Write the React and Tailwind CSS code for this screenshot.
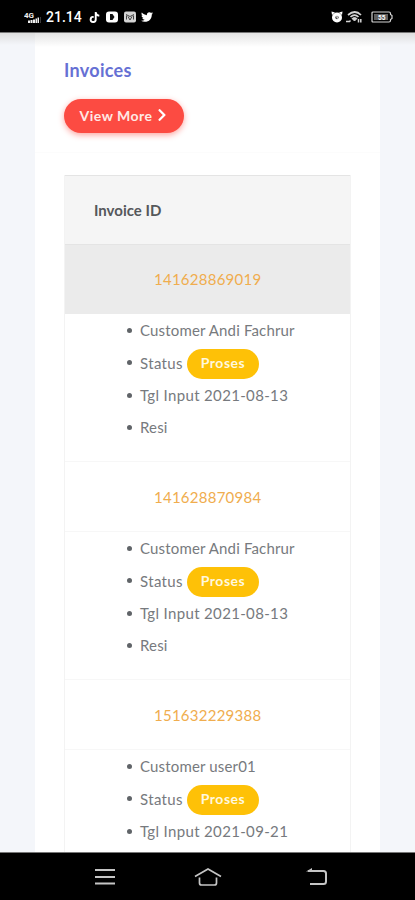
import { FaChevronRight, FaTwitter, FaTiktok } from "react-icons/fa";

const invoices = [
  { id: "141628869019", customer: "Andi Fachrur", date: "2021-08-13", showResi: true },
  { id: "141628870984", customer: "Andi Fachrur", date: "2021-08-13", showResi: true },
  { id: "151632229388", customer: "user01", date: "2021-09-21", showResi: false },
];

const StatusBar = () => {
  return (
    <div className="h-[33px] shrink-0 bg-black border-b border-[#777] flex items-center justify-between pl-6 pr-[22px] pt-0.5 text-white">
      <div className="flex items-center">
        <svg width="17" height="13" viewBox="0 0 17 13" fill="#f0f0f0">
          <text x="0" y="6.500" fontSize="8" fontWeight="700" fontFamily="Roboto, sans-serif">
            4G
          </text>
          <rect x="4" y="9.500" width="2" height="2.500" />
          <rect x="6.500" y="9" width="2" height="3" />
          <rect x="9" y="8.500" width="2" height="3.500" />
          <rect x="11.500" y="7.500" width="1.500" height="4.500" />
          <rect x="13.500" y="6.500" width="1.500" height="5.500" />
          <rect x="16" y="6" width="0.7" height="6" fill="#555" />
        </svg>
        <span className="ml-[5px] w-[35px] whitespace-nowrap font-[Roboto,sans-serif] text-[14px] leading-4 font-medium">
          21.14
        </span>
        <FaTiktok className="ml-2 w-[11px] h-[11px]" />
        <svg className="ml-[6px]" width="12" height="12" viewBox="0 0 12 12">
          <rect x="0" y="0.5" width="12" height="11" rx="3" fill="#fff" />
          <path d="M4 3h2.500L8.500 6 6.500 9H4z" fill="#111" />
        </svg>
        <svg className="ml-[6px]" width="12" height="12" viewBox="0 0 12 12">
          <rect x="0" y="0.5" width="12" height="11" rx="2" fill="#d4d4d4" />
          <path d="M2 3.500 6 5.500l4-2M2.500 4.500v4M9.500 4.500v4M4 5.500l2 3.500 2-3.500" fill="none" stroke="#444" />
        </svg>
        <FaTwitter className="ml-[5px] w-3 h-3" />
      </div>
      <div className="flex items-center">
        <svg width="12" height="12" viewBox="0 0 12 12" fill="#fff">
          <circle cx="6" cy="6.500" r="5" />
          <path d="M0.500 0.500 4 1.500 1 4zM11.500 0.500 8 1.500 11 4z" />
          <circle cx="6" cy="6.500" r="1.700" fill="#444" />
          <path d="M6 4.800v2l1.300.5" stroke="#fff" fill="none" />
        </svg>
        <svg className="ml-[3px]" width="17" height="12" viewBox="0 0 17 12" fill="none" stroke="#d4d4d4">
          <path d="M2 4q7-6 13 0M4.500 6q4-4 8 0" strokeWidth="1.700" />
          <path d="M6 7.500q2.500-2 5 0L8.500 10z" fill="#d4d4d4" />
          <path d="M0 10.500h3.500l1-1M12.500 8v3.500M14.800 8v3.500" strokeWidth="1.500" />
        </svg>
        <svg className="ml-2" width="22" height="12" viewBox="0 0 22 12">
          <path d="M2 1h16q1.500 0 1.500 1.500v1l1.500 1v3l-1.500 1v1Q19.500 11 18 11H2Q1 11 1 10V2Q1 1 2 1z" fill="none" stroke="#d4d4d4" strokeWidth="1.200" />
          <rect x="3" y="3" width="14" height="6" fill="#5f5f5f" />
          <text x="7" y="8.500" fontSize="6.500" fontWeight="700" fill="#fff" fontFamily="Roboto, sans-serif">
            55
          </text>
        </svg>
      </div>
    </div>
  );
};

const ListItem = ({ children }) => {
  return (
    <li className="h-[32.250px] flex items-center whitespace-nowrap">
      <span className="mr-2 h-[5px] w-[5px] rounded-full bg-[#606468]" />
      {children}
    </li>
  );
};

const InvoiceRow = ({ invoice, first }) => {
  return (
    <div>
      <div
        className={
          first
            ? "h-[69px] pl-[89px] flex items-center bg-[#ebebeb]"
            : "h-[71px] pl-[89px] pt-0.5 flex items-center border-y border-[#f7f7f7]"
        }
      >
        <a href="#" className="text-[15px] tracking-[0.25px] text-[#f0ad4e]">
          {invoice.id}
        </a>
      </div>
      <ul className="h-[147px] pt-[0.6px] pl-[62px] text-[15px] tracking-[0.16px] text-[#777a7e]">
        <ListItem>
          <span>Customer {invoice.customer}</span>
        </ListItem>
        <ListItem>
          <span className="w-[47px] tracking-[0.35px]">Status</span>
          <span className="mt-0.5 flex h-[30px] w-[72px] items-center justify-center rounded-full bg-[#fec107] pb-0.5 text-[14px] font-bold tracking-[0.5px] text-[#fff8df]">
            Proses
          </span>
        </ListItem>
        <ListItem>
          <span className="tracking-[0.34px]">Tgl Input {invoice.date}</span>
        </ListItem>
        {invoice.showResi && (
          <ListItem>
            <span>Resi</span>
          </ListItem>
        )}
      </ul>
    </div>
  );
};

const NavigationBar = () => {
  return (
    <div className="h-[48px] shrink-0 border-t border-[#777] bg-black flex items-center justify-between pl-[95px] pr-[87px]">
      <svg width="20" height="18" viewBox="0 0 20 18" stroke="#c5c5c5" strokeWidth="2">
        <path d="M0 2h20M0 9h20M0 15.500h20" />
      </svg>
      <svg className="mr-1.5" width="28" height="20" viewBox="0 0 28 20" fill="none" stroke="#c5c5c5" strokeWidth="1.700">
        <path d="M1 9.500 14 2l13 7.500" />
        <path d="M5.500 10.500v5.500q0 2 2 2h13q2 0 2-2v-5.500" />
      </svg>
      <svg width="22" height="20" viewBox="0 0 22 20" fill="none" stroke="#c5c5c5" strokeWidth="2">
        <path d="M2 4h15.500q2.500 0 2.500 2.500v8q0 2.500-2.500 2.500H4" />
        <path d="M0 4.500 6 1v3.500z" fill="#c5c5c5" stroke="none" />
      </svg>
    </div>
  );
};

const App = () => {
  return (
    <div className="h-[900px] w-[415px] overflow-hidden flex flex-col bg-[#f4f6fa] font-[Lato,sans-serif]">
      <StatusBar />
      <div className="min-h-0 flex-1 overflow-hidden bg-linear-to-b from-[#dedede] to-transparent bg-[length:100%_12px] bg-no-repeat">
        <div className="ml-[35px] w-[345px] bg-white bg-linear-to-b from-[#e4e4e4] to-white bg-[length:100%_14px] bg-no-repeat">
          <div className="h-[120px] pl-[29px] pt-[25px] border-b border-[#fcfcfc]">
            <h4 className="text-[18px] leading-6 font-bold tracking-[0.3px] text-[#6670d4]">
              Invoices
            </h4>
            <button className="mt-[17px] h-[34px] w-[120px] pb-0.5 pr-0.5 rounded-full bg-[#fc4b42] flex items-center justify-center text-[14px] font-bold tracking-[0.5px] text-[#ffe9e5] shadow-[0_2px_6px_#fda49f]">
              View More
              <FaChevronRight className="ml-1 w-[10px] h-[14px] text-white" />
            </button>
          </div>
          <div className="mt-[22px] mx-[29px] w-[287px] border-x border-[#f3f3f3]">
            <div className="h-[70px] pl-[29px] pt-px flex items-center border-y border-[#e4e4e4] bg-[#f5f5f5] text-[15px] font-bold text-[#55585b]">
              Invoice ID
            </div>
            {invoices.map((invoice, index) => (
              <InvoiceRow key={invoice.id} invoice={invoice} first={index === 0} />
            ))}
          </div>
        </div>
      </div>
      <NavigationBar />
    </div>
  );
};

export default App;
